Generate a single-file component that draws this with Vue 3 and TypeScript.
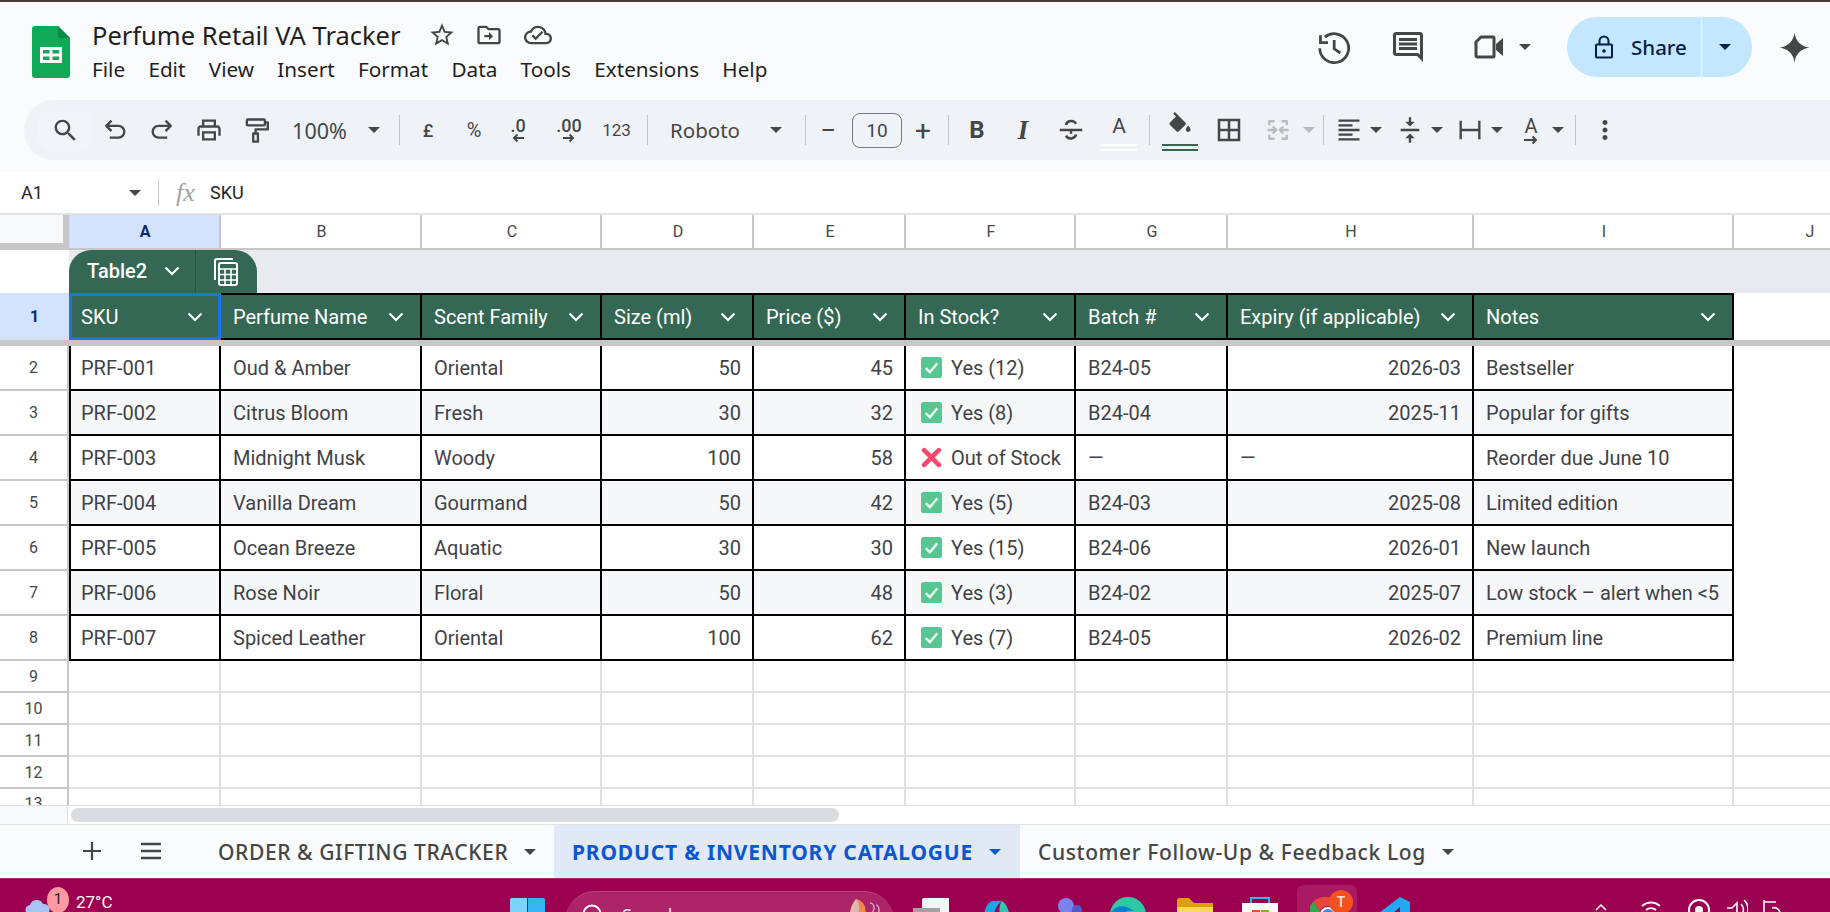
<template>
  <div class="page">
    <header class="top">
      <svg class="logo" width="38" height="52" viewBox="0 0 38 52">
        <path d="M3 0H26L38 12V49a3 3 0 0 1-3 3H3a3 3 0 0 1-3-3V3a3 3 0 0 1 3-3Z" fill="#0fa958" />
        <path d="M26 0L38 12H29a3 3 0 0 1-3-3Z" fill="#0a8a47" />
        <path d="M8 21H30V37H8ZM11 24V27.500H17.500V24ZM20.500 24V27.500H27V24ZM11 30.500V34H17.500V30.500ZM20.500 30.500V34H27V30.500Z" fill="#fff" fill-rule="evenodd" />
      </svg>
      <div class="doc">
        <div class="title-row">
          <span class="title">Perfume Retail VA Tracker</span>
          <svg class="t-star" width="28" height="28" viewBox="0 0 24 24"><path :d="icons.star" /></svg>
          <svg class="t-move" width="28" height="28" viewBox="0 0 24 24"><path :d="icons.move" /></svg>
          <svg class="t-cloud" width="28" height="28" viewBox="0 0 24 24"><path :d="icons.cloud" /></svg>
        </div>
        <nav class="menu">
          <span v-for="m in menus" :key="m">{{ m }}</span>
        </nav>
      </div>
      <div class="actions">
        <svg class="a-history" width="33" height="33" viewBox="0 0 24 24"><path :d="icons.history" fill="none" stroke="#444746" stroke-width="2" /></svg>
        <svg class="a-comment" width="36" height="36" viewBox="0 0 24 24"><path :d="icons.comment" /></svg>
        <svg class="a-video" width="30" height="24" viewBox="0 0 30 24"><path d="M7 2H19a1 1 0 0 1 1 1V21a1 1 0 0 1-1 1H3.500A1.500 1.500 0 0 1 2 20.500V7Z" fill="none" stroke="#444746" stroke-width="3" stroke-linejoin="round" /><path d="M22 9l7-6V21l-7-6Z" /></svg>
        <i class="caret a-caret"></i>
        <div class="share">
          <div class="share-main">
            <svg width="18" height="24" viewBox="0 0 18 24"><path d="M2 9.500H16a1 1 0 0 1 1 1V21.500a1 1 0 0 1-1 1H2a1 1 0 0 1-1-1V10.500a1 1 0 0 1 1-1ZM4.500 9.500V6a4.500 4.500 0 0 1 9 0V9.500" fill="none" stroke="#041e49" stroke-width="2" /><circle cx="9" cy="16" r="1.800" fill="#041e49" /></svg>
            <span>Share</span>
          </div>
          <div class="share-more"><i class="caret dark"></i></div>
        </div>
        <svg class="a-spark" width="31" height="31" viewBox="0 0 24 24"><path d="M12 0.500Q13.500 10.500 23.500 12Q13.500 13.500 12 23.500Q10.500 13.500 0.500 12Q10.500 10.500 12 0.500Z" /></svg>
      </div>
    </header>

    <div class="toolbar">
      <div v-for="(t, i) in toolbar" :key="i" class="tool" :class="t.cls" :style="{ width: t.w + 'px', marginLeft: t.ml + 'px' }">
        <svg v-if="t.d" :width="t.size || 28" :height="t.size || 28" viewBox="0 0 24 24">
          <path v-if="t.stroke" :d="t.d" fill="none" stroke="currentColor" stroke-width="2" stroke-linejoin="round" />
          <path v-else :d="t.d" fill="currentColor" />
        </svg>
        <i v-else-if="t.caret" class="caret"></i>
        <span v-else-if="t.text">{{ t.text }}</span>
        <svg v-if="t.arrow" class="dec-arrow" width="14" height="10" viewBox="0 0 14 10"><path :d="t.arrow" fill="none" stroke="currentColor" stroke-width="2" /></svg>
        <em v-if="t.bar" class="bar"></em>
      </div>
    </div>

    <div class="formula">
      <span class="namebox">A1</span>
      <i class="caret"></i>
      <b class="fsep"></b>
      <span class="fx">fx</span>
      <span class="fvalue">SKU</span>
    </div>

    <div class="sheet">
      <div class="row colhead">
        <div class="corner"></div>
        <div v-for="(c, i) in letters" :key="c" class="letter" :class="{ on: i === 0 }">{{ c }}</div>
      </div>

      <div class="band">
        <div class="band-tab">
          <div class="tab-name">
            <span>Table2</span>
            <svg width="16" height="10" viewBox="0 0 16 10"><path d="M1.500 1.500L8 8l6.500-6.500" fill="none" stroke="#fff" stroke-width="2" /></svg>
          </div>
          <div class="tab-calc">
            <svg width="26" height="30" viewBox="0 0 26 30" fill="none" stroke="#fff" stroke-width="2"><path d="M2 23V4a2 2 0 0 1 2-2H20" /><rect x="6" y="6" width="18" height="22" rx="2" /><path d="M6 12H24M6 17.500H24M6 23H24M12 12V28M18 12V28" stroke-width="1.600" /></svg>
          </div>
        </div>
      </div>

      <div class="row headrow">
        <div class="rownum on">1</div>
        <div v-for="(h, i) in headers" :key="h" class="hcell" :class="{ active: i === 0 }">
          <span>{{ h }}</span>
          <svg width="16" height="10" viewBox="0 0 16 10"><path d="M1.500 1.500L8 8l6.500-6.500" fill="none" stroke="#fff" stroke-width="2" /></svg>
        </div>
      </div>
      <div class="frozen"></div>

      <div v-for="(r, ri) in rows" :key="r[0]" class="row datarow" :class="{ alt: ri % 2 === 1 }">
        <div class="rownum">{{ ri + 2 }}</div>
        <div v-for="(v, ci) in r" :key="ci" class="cell" :class="{ num: isNum(v), first: ci === 0 }">
          <template v-if="ci === 5">
            <svg v-if="v.startsWith('Yes')" class="emoji" width="21" height="21" viewBox="0 0 20 20">
              <rect width="20" height="20" rx="2.500" fill="#57c690" /><path d="M4.500 10.500L8.500 14.500L15.500 6" fill="none" stroke="#eafaf1" stroke-width="2.400" />
            </svg>
            <svg v-else class="emoji" width="21" height="21" viewBox="0 0 20 20">
              <path d="M3 3L17 17M17 3L3 17" fill="none" stroke="#f4496d" stroke-width="4.500" stroke-linecap="round" />
            </svg>
          </template>
          <span>{{ v }}</span>
        </div>
      </div>

      <div v-for="n in [9, 10, 11, 12, 13]" :key="n" class="row blank" :class="{ cut: n === 13 }">
        <div class="rownum">{{ n }}</div>
        <div v-for="c in letters" :key="c" class="bcell"></div>
      </div>

      <div class="hscroll">
        <div class="hs-corner"></div>
        <div class="hs-thumb"></div>
      </div>
    </div>

    <div class="tabs">
      <svg class="tab-add" width="24" height="24" viewBox="0 0 24 24"><path d="M12 3V21M3 12H21" stroke="#444746" stroke-width="2.200" fill="none" /></svg>
      <svg class="tab-all" width="24" height="24" viewBox="0 0 24 24"><path d="M2 5H22M2 12H22M2 19H22" stroke="#444746" stroke-width="2.400" fill="none" /></svg>
      <div class="stab first-tab"><span>ORDER &amp; GIFTING TRACKER</span><i class="caret"></i></div>
      <div class="stab current"><span>PRODUCT &amp; INVENTORY CATALOGUE</span><i class="caret blue"></i></div>
      <div class="stab last-tab"><span>Customer Follow-Up &amp; Feedback Log</span><i class="caret"></i></div>
    </div>

    <footer class="taskbar">
      <div class="weather">
        <svg width="26" height="20" viewBox="0 0 26 20"><path d="M6 20a5 5 0 0 1-1-10a7 7 0 0 1 13-1a5.500 5.500 0 0 1 2 11Z" fill="#a9c4f2" /></svg>
        <span class="wbadge">1</span>
        <span class="temp">27°C</span>
      </div>
      <div v-for="(t, i) in taskIcons" :key="i" class="task" :style="{ width: t.w + 'px', marginLeft: t.ml + 'px', marginTop: t.top + 'px' }">
        <div v-if="t.kind === 'search'" class="search-pill">
          <svg width="24" height="24" viewBox="0 0 24 24"><circle cx="11" cy="11" r="8.500" fill="none" stroke="#fff" stroke-width="2" /></svg>
          <span>Search</span>
          <svg class="fig" width="38" height="22" viewBox="0 0 38 22"><path d="M14 1C22 3 26 10 22 22H8C6 14 10 6 14 1Z" fill="#f08a4b" /><path d="M14 1C18 5 18 12 15 22H8C7 14 10 6 14 1Z" fill="#e0b8b0" /><path d="M28 5a4 5 0 0 1 0 10M34 7a3 6 0 0 1 0 12" fill="none" stroke="#d7a8c8" stroke-width="1.500" /></svg>
        </div>
        <div v-else-if="t.kind === 'chrome'" class="chrome-slot">
          <svg width="36" height="40" viewBox="0 0 36 40"><path d="M18 0a18 18 0 0 1 15.600 9H18a9 9 0 0 0-8 5L3 5A18 18 0 0 1 18 0Z" fill="#e8453c" /><path d="M3 5l7 9a9 9 0 0 0 1 10L3 30A18 18 0 0 1 3 5Z" fill="#34a853" /><circle cx="18" cy="18" r="7" fill="#4285f4" stroke="#fff" stroke-width="2" /></svg>
          <span class="chrome-badge">T</span>
        </div>
        <svg v-else :width="t.w" height="40" :viewBox="`0 0 ${t.w} 40`">
          <path v-for="(p, j) in t.paths" :key="j" :d="p.d" :fill="p.line ? 'none' : p.fill" :stroke="p.line ? p.fill : 'none'" :stroke-width="p.line || 0" />
        </svg>
      </div>
    </footer>
  </div>
</template>

<script setup lang="ts">
interface Tool {
  c: number
  w: number
  d?: string
  stroke?: boolean
  size?: number
  text?: string
  caret?: boolean
  arrow?: string
  bar?: boolean
  cls?: string
}
interface TaskIcon {
  c: number
  w: number
  top: number
  kind?: 'search' | 'chrome'
  paths?: { d: string; fill: string; line?: number }[]
}

const icons = {
  star: 'M22 9.240l-7.190-.620L12 2 9.190 8.630 2 9.240l5.460 4.730L5.820 21 12 17.270 18.180 21l-1.630-7.030L22 9.240zM12 15.400l-3.760 2.270 1-4.280-3.320-2.880 4.380-.380L12 6.100l1.710 4.040 4.380.380-3.320 2.880 1 4.280L12 15.400z',
  move: 'M20 6h-8l-2-2H4c-1.100 0-2 .9-2 2v12c0 1.100.9 2 2 2h16c1.100 0 2-.9 2-2V8c0-1.100-.9-2-2-2zm0 12H4V6h5.170l2 2H20v10zM12 14H8v-2h4V9.500l3.500 3.500-3.500 3.500V14z',
  cloud: 'M19.350 10.040C18.670 6.590 15.640 4 12 4 9.110 4 6.600 5.640 5.350 8.040 2.340 8.360 0 10.910 0 14c0 3.310 2.690 6 6 6h13c2.760 0 5-2.240 5-5 0-2.640-2.050-4.780-4.650-4.960zM19 18H6c-2.210 0-4-1.790-4-4s1.790-4 4-4h.71C7.370 7.690 9.480 6 12 6c3.040 0 5.500 2.460 5.500 5.500v.5H19c1.660 0 3 1.340 3 3s-1.340 3-3 3zm-9-1.500l-3.500-3.500 1.410-1.410L10 13.670l5.180-5.180 1.410 1.410L10 16.500z',
  history: 'M5.750 4.460A10.500 10.500 0 1 1 2 12.500M2.500 3v5.500H8M12.500 6.500V13L17 16',
  comment: 'M21.990 4c0-1.100-.89-2-1.990-2H4c-1.100 0-2 .9-2 2v12c0 1.100.9 2 2 2h14l4 4-.01-18zM20 4v13.170L18.830 16H4V4h16zM6 12h12v2H6zm0-3h12v2H6zm0-3h12v2H6z',
  search: 'M15.500 14h-.79l-.28-.27C15.410 12.590 16 11.110 16 9.500 16 5.910 13.090 3 9.500 3S3 5.910 3 9.500 5.910 16 9.500 16c1.610 0 3.090-.59 4.230-1.570l.27.28v.79l5 4.990L20.490 19l-4.990-5zm-6 0C7.010 14 5 11.990 5 9.500S7.010 5 9.500 5 14 7.010 14 9.500 11.990 14 9.500 14z',
  print: 'M19 8h-1V3H6v5H5c-1.660 0-3 1.340-3 3v6h4v4h12v-4h4v-6c0-1.660-1.340-3-3-3zM8 5h8v3H8V5zm8 14H8v-4h8v4zm2-2v-4H6v4H4v-6c0-.55.45-1 1-1h14c.55 0 1 .45 1 1v6h-2z',
  fill: 'M16.560 8.940L7.620 0 6.210 1.410l2.380 2.380-5.150 5.150c-.59.59-.59 1.540 0 2.120l5.500 5.500c.29.29.68.44 1.060.44s.77-.15 1.060-.44l5.500-5.500c.59-.58.59-1.530 0-2.120zM19 11.500s-2 2.170-2 3.500c0 1.100.9 2 2 2s2-.9 2-2c0-1.330-2-3.500-2-3.500z',
  borders: 'M3 3v18h18V3H3zm8 16H5v-6h6v6zm0-8H5V5h6v6zm8 8h-6v-6h6v6zm0-8h-6V5h6v6z',
  alignLeft: 'M15 15H3v2h12v-2zm0-8H3v2h12V7zM3 13h18v-2H3v2zm0 8h18v-2H3v2zM3 3v2h18V3H3z',
  valign: 'M8 19h3v4h2v-4h3l-4-4-4 4zm8-14h-3V1h-2v4H8l4 4 4-4zM4 11v2h16v-2H4z',
  dots: 'M12 8c1.100 0 2-.9 2-2s-.9-2-2-2-2 .9-2 2 .9 2 2 2zm0 2c-1.100 0-2 .9-2 2s.9 2 2 2 2-.9 2-2-.9-2-2-2zm0 6c-1.100 0-2 .9-2 2s.9 2 2 2 2-.9 2-2-.9-2-2-2z',
}

// items carry their centre x, the left margin is worked out from the previous item
function place<T extends { c: number; w: number }>(items: T[], start: number) {
  let x = start
  return items.map((it) => {
    const left = it.c - it.w / 2
    const ml = left - x
    x = left + it.w
    return { ...it, ml }
  })
}

const sep = (c: number): Tool => ({ c, w: 1, cls: 'sep' })
const circle = (cx: number, cy: number, r: number) => `M${cx - r} ${cy}a${r} ${r} 0 1 1 ${r * 2} 0a${r} ${r} 0 1 1 ${-r * 2} 0Z`

const toolbar = place<Tool>([
  { c: 65, w: 55, d: icons.search, size: 29, cls: 'searchbtn' },
  { c: 115, w: 28, d: 'M9 4L4.500 8.500L9 13M5 8.500H15a5 5 0 0 1 0 10H7.500', stroke: true },
  { c: 162, w: 28, d: 'M15 4L19.500 8.500L15 13M19 8.500H9a5 5 0 0 0 0 10H16.500', stroke: true },
  { c: 209, w: 28, d: icons.print },
  { c: 255, w: 28, d: 'M6 3H19.500a1 1 0 0 1 1 1V7a1 1 0 0 1-1 1H6a1 1 0 0 1-1-1V4a1 1 0 0 1 1-1ZM20.500 5.500H23V11.500H12.500V15M10.500 15H14.500V22H10.500Z', stroke: true },
  { c: 319.5, w: 56, text: '100%', cls: 'tt zoomtxt' },
  { c: 374, w: 12, caret: true },
  sep(399.5),
  { c: 428, w: 20, text: '£', cls: 'tt sm' },
  { c: 474, w: 24, text: '%', cls: 'tt pct' },
  { c: 518, w: 30, text: '.0', cls: 'tt dec', arrow: 'M13 5H3M6.500 1.500L3 5L6.500 8.500' },
  { c: 569, w: 34, text: '.00', cls: 'tt dec', arrow: 'M1 5H11M7.500 1.500L11 5L7.500 8.500' },
  { c: 616.5, w: 34, text: '123', cls: 'tt n123' },
  sep(647),
  { c: 705, w: 72, text: 'Roboto', cls: 'tt big' },
  { c: 775.5, w: 12, caret: true },
  sep(805),
  { c: 828, w: 16, text: '−', cls: 'tt pm' },
  { c: 877, w: 50, text: '10', cls: 'tt sizebox' },
  { c: 923, w: 20, text: '+', cls: 'tt pm' },
  sep(948),
  { c: 977, w: 20, text: 'B', cls: 'tt bold' },
  { c: 1023, w: 20, text: 'I', cls: 'tt ital' },
  { c: 1071, w: 28, d: 'M8 8a4.200 3.800 0 0 1 8 -1M16 15.500a4.200 3.800 0 0 1-8 1M3 12H21M12 15V12', stroke: true, size: 30 },
  { c: 1119, w: 36, text: 'A', cls: 'tt letterA', bar: true },
  sep(1149.5),
  { c: 1179.5, w: 36, d: icons.fill, size: 28, cls: 'fillbtn', bar: true },
  { c: 1229, w: 30, d: icons.borders, size: 30 },
  { c: 1278, w: 28, d: 'M9 4.500H4.500V8M4.500 16V19.500H9M15 4.500H19.500V8M19.500 16V19.500H15M3 12H10M7.500 9L10.500 12L7.500 15M21 12H14M16.500 9L13.500 12L16.500 15', stroke: true, cls: 'off' },
  { c: 1309, w: 12, caret: true, cls: 'off' },
  sep(1323.5),
  { c: 1349, w: 28, d: icons.alignLeft },
  { c: 1376, w: 12, caret: true },
  { c: 1410, w: 28, d: icons.valign },
  { c: 1437, w: 12, caret: true },
  { c: 1470, w: 28, d: 'M4 4V20M20 4V20M4 12H20', stroke: true },
  { c: 1497, w: 12, caret: true },
  { c: 1531, w: 26, text: 'A', cls: 'tt rotA', arrow: 'M0 5H12M8.500 1.500L12 5L8.500 8.500' },
  { c: 1558, w: 12, caret: true },
  sep(1575),
  { c: 1605, w: 28, d: icons.dots, size: 30 },
], 24)

const menus = ['File', 'Edit', 'View', 'Insert', 'Format', 'Data', 'Tools', 'Extensions', 'Help']
const letters = ['A', 'B', 'C', 'D', 'E', 'F', 'G', 'H', 'I', 'J']
const headers = ['SKU', 'Perfume Name', 'Scent Family', 'Size (ml)', 'Price ($)', 'In Stock?', 'Batch #', 'Expiry (if applicable)', 'Notes']
const rows = [
  ['PRF-001', 'Oud & Amber', 'Oriental', '50', '45', 'Yes (12)', 'B24-05', '2026-03', 'Bestseller'],
  ['PRF-002', 'Citrus Bloom', 'Fresh', '30', '32', 'Yes (8)', 'B24-04', '2025-11', 'Popular for gifts'],
  ['PRF-003', 'Midnight Musk', 'Woody', '100', '58', 'Out of Stock', '—', '—', 'Reorder due June 10'],
  ['PRF-004', 'Vanilla Dream', 'Gourmand', '50', '42', 'Yes (5)', 'B24-03', '2025-08', 'Limited edition'],
  ['PRF-005', 'Ocean Breeze', 'Aquatic', '30', '30', 'Yes (15)', 'B24-06', '2026-01', 'New launch'],
  ['PRF-006', 'Rose Noir', 'Floral', '50', '48', 'Yes (3)', 'B24-02', '2025-07', 'Low stock – alert when <5'],
  ['PRF-007', 'Spiced Leather', 'Oriental', '100', '62', 'Yes (7)', 'B24-05', '2026-02', 'Premium line'],
]
const isNum = (v: string) => /^\d[\d-]*$/.test(v)

// taskbar runs past the bottom of the window, so only the tops of these show
const taskIcons = place<TaskIcon>([
  { c: 527, w: 35, top: 19, paths: [{ d: 'M0 2a2 2 0 0 1 2-2H17V17H0Z', fill: '#7dd3fb' }, { d: 'M18 0H33a2 2 0 0 1 2 2V17H18Z', fill: '#37b6f6' }] },
  { c: 729.5, w: 329, top: 12, kind: 'search' },
  { c: 931, w: 36, top: 19, paths: [{ d: 'M9 2a2 2 0 0 1 2-2H36V40H9Z', fill: '#f4f4f4' }, { d: 'M0 10H27V40H0Z', fill: '#a3a3a3' }] },
  { c: 997, w: 32, top: 22, paths: [{ d: 'M11 0H21C15 4 13 12 10 22L2 20C3 9 6 2 11 0Z', fill: '#1aa5e8' }, { d: 'M21 0C25 2 27 8 29 14L19 15C18 9 18 4 21 0Z', fill: '#35c4b0' }, { d: circle(25, 20, 7), fill: '#b450d2' }] },
  { c: 1063, w: 37, top: 19, paths: [{ d: circle(21, 8, 8), fill: '#7b83eb' }, { d: circle(32, 12, 5), fill: '#5059c9' }, { d: 'M12 18H37V40H12Z', fill: '#7b83eb' }, { d: 'M0 19H18V40H0Z', fill: '#4b53bc' }] },
  { c: 1128, w: 36, top: 18, paths: [{ d: circle(18, 18, 18), fill: '#2fc8a4' }, { d: 'M0 20C2 8 14 6 24 14C14 12 8 18 8 40H0Z', fill: '#0f7fd1' }] },
  { c: 1195, w: 36, top: 19, paths: [{ d: 'M0 2a2 2 0 0 1 2-2H12L17 5H36V40H0Z', fill: '#dca000' }, { d: 'M0 9H36V40H0Z', fill: '#ffd75e' }] },
  { c: 1260, w: 36, top: 18, paths: [{ d: 'M0 6H36V40H0Z', fill: '#fafafa' }, { d: 'M8 6V0H28V6H26V2H10V6Z', fill: '#25bfe6' }, { d: 'M10 13H18V40H10Z', fill: '#f25022' }, { d: 'M19 13H27V40H19Z', fill: '#7fba00' }] },
  { c: 1327, w: 60, top: 6, kind: 'chrome' },
  { c: 1392, w: 36, top: 18, paths: [{ d: 'M26 0L36 5V40H26V10L12 22L5 16Z', fill: '#23a9f2' }, { d: 'M5 16L12 22L6 28L0 24Z', fill: '#0c7ec4' }] },
  { c: 1601, w: 14, top: 24, paths: [{ d: 'M2 7L7 2L12 7', fill: '#fff', line: 1.5 }] },
  { c: 1651, w: 24, top: 19, paths: [{ d: 'M3 8a13 13 0 0 1 18 0M7 12a8 8 0 0 1 10 0', fill: '#fff', line: 2 }] },
  { c: 1699, w: 24, top: 19, paths: [{ d: circle(12, 12, 10), fill: '#fff', line: 2 }, { d: circle(12, 12, 4), fill: '#fff' }] },
  { c: 1736, w: 24, top: 19, paths: [{ d: 'M3 10H8L13 5V18M17 6a8 8 0 0 1 2 8M20 2a12 12 0 0 1 3 14', fill: '#fff', line: 1.6 }] },
  { c: 1771, w: 22, top: 19, paths: [{ d: 'M4 2V18M4 4H16M12 10a6 6 0 0 1 8 6', fill: '#fff', line: 1.6 }] },
], 130)
</script>

<style scoped>
.page { width: 1830px; height: 912px; overflow: hidden; background: #f9fbfd; font-family: Roboto, sans-serif; color: #444746; border-top: 2px solid #4a3a3c; box-sizing: border-box; display: flex; flex-direction: column; }
svg { display: block; flex: none; fill: #444746; }

.top { display: flex; height: 98px; flex: none; }
.logo { margin: 24px 0 0 32px; }
.doc { margin-left: 22px; }
.title-row { display: flex; align-items: center; height: 38px; margin-top: 14px; }
.title { font-family: "Noto Sans", sans-serif; font-size: 25.5px; color: #1f1f1f; width: 336px; white-space: nowrap; }
.t-move { margin-left: 19px; }
.t-cloud { margin-left: 21px; }
.menu { display: flex; gap: 23.3px; font-family: "Noto Sans", sans-serif; font-size: 20.7px; color: #1f1f1f; margin-top: 1px; line-height: 28px; }

.actions { margin-left: auto; margin-right: 20px; display: flex; align-items: center; height: 60px; margin-top: 15px; }
.a-comment { margin-left: 40px; }
.a-video { margin-left: 48px; }
.a-caret { margin-left: 15px; }
.share { display: flex; height: 60px; margin-left: 36px; color: #041e49; }
.share-main { width: 134px; background: #c2e7ff; border-radius: 30px 0 0 30px; display: flex; align-items: center; padding-left: 28px; box-sizing: border-box; gap: 18px; font-family: "Noto Sans", sans-serif; font-size: 20.5px; font-weight: 500; }
.share-more { width: 50px; margin-left: 1px; background: #c2e7ff; border-radius: 0 30px 30px 0; display: flex; align-items: center; justify-content: center; padding-right: 4px; box-sizing: border-box; }
.a-spark { margin-left: 27px; }

.caret { display: block; flex: none; width: 0; height: 0; border-left: 6px solid transparent; border-right: 6px solid transparent; border-top: 6px solid #444746; }
.caret.dark { border-top-color: #041e49; }
.caret.blue { border-top-color: #0b57d0; }

.toolbar { display: flex; align-items: center; flex: none; height: 60px; margin-left: 24px; background: #eff3f8; border-radius: 30px 0 0 30px; }
.tool { display: flex; align-items: center; justify-content: center; flex: none; height: 42px; color: #444746; position: relative; }
.searchbtn { background: #f0f4fb; border-radius: 14px; }
.sep { height: 30px; background: #c4c7c5; }
.off { color: #b9bcbd; }
.off .caret { border-top-color: #b9bcbd; }
.tt { font-family: "Noto Sans", sans-serif; white-space: nowrap; }
.big { font-size: 20.5px; }
.zoomtxt { font-size: 21.5px; }
.sm { font-family: Roboto, sans-serif; font-size: 18px; font-weight: 500; }
.pct { font-family: Roboto, sans-serif; font-size: 20px; }
.n123 { font-family: Roboto, sans-serif; font-size: 17px; }
.dec { flex-direction: column; font-family: Roboto, sans-serif; font-size: 18px; font-weight: 500; line-height: 18px; align-items: center; }
.dec-arrow { margin-top: -2px; fill: none; }
.pm { font-family: Roboto, sans-serif; font-size: 28px; font-weight: 400; }
.sizebox { border: 1px solid #747775; border-radius: 8px; box-sizing: border-box; height: 35px; font-family: Roboto, sans-serif; font-size: 19px; }
.bold { font-family: Roboto, sans-serif; font-weight: 700; font-size: 24px; }
.ital { font-family: "Liberation Serif", serif; font-style: italic; font-weight: 700; font-size: 27px; }
.letterA { font-family: Roboto, sans-serif; font-size: 21px; padding-bottom: 8px; box-sizing: border-box; }
.rotA { flex-direction: column; font-family: Roboto, sans-serif; font-size: 20px; line-height: 20px; }
.rotA .dec-arrow { margin-top: -1px; }
.fillbtn { padding-bottom: 8px; box-sizing: border-box; }
.bar { position: absolute; left: 0; right: 0; bottom: 0; height: 7px; border-top: 2px solid; border-bottom: 2px solid; box-sizing: border-box; }
.letterA .bar { border-color: #fff; }
.fillbtn .bar { border-color: #34664f; }

.formula { display: flex; align-items: center; flex: none; height: 41px; margin-top: 12px; background: #fff; color: #1f1f1f; }
.namebox { margin-left: 21px; width: 108px; font-size: 18px; }
.fsep { width: 1px; height: 26px; background: #c7c7c7; margin-left: 17px; }
.fx { font-family: "Liberation Serif", serif; font-style: italic; font-size: 26px; color: #a2a2a2; margin-left: 17px; width: 34px; }
.fvalue { font-size: 18px; }

.sheet { flex: 1; min-height: 0; background: #fff; display: flex; flex-direction: column; overflow: hidden; }
.row { display: grid; grid-template-columns: 69px 152px 201px 180px 152px 152px 170px 152px 246px 260px 152px; flex: none; }

.colhead { height: 37px; box-sizing: border-box; border-top: 2px solid #e3e3e3; }
.corner { background: #f8f9fa; border-right: 6px solid #c7c7c7; border-bottom: 7px solid #c7c7c7; box-sizing: border-box; }
.letter { display: flex; align-items: center; justify-content: center; font-size: 16px; padding-left: 2px; border-right: 2px solid #c7c7c7; border-bottom: 2px solid #c7c7c7; box-sizing: border-box; }
.letter.on { background: #d3e3fd; color: #0b2a6b; font-weight: 700; }

.band { height: 43px; flex: none; background: #e8eaed; margin-left: 69px; display: flex; align-items: stretch; }
.band-tab { display: flex; background: #356854; border-radius: 22px 22px 0 0; width: 188px; color: #fff; }
.tab-name { width: 127px; display: flex; align-items: center; gap: 17px; padding: 0 0 2px 18px; box-sizing: border-box; font-size: 20px; font-weight: 500; border-right: 1px solid #2a5442; }
.tab-calc { flex: 1; display: flex; align-items: center; justify-content: center; padding-right: 2px; }
.tab-calc svg, .hcell svg { fill: none; }

.headrow { height: 47px; }
.rownum { display: flex; align-items: center; justify-content: center; font-size: 16px; border-right: 2px solid #c7c7c7; border-bottom: 2px solid #c7c7c7; box-sizing: border-box; background: #fff; }
.rownum.on { background: #d3e3fd; color: #0b2a6b; font-weight: 700; border: 0; }
.hcell { display: flex; align-items: center; justify-content: space-between; background: #356854; color: #fff; font-size: 20px; padding: 0 16px 0 12px; box-sizing: border-box; border-right: 2px solid #000; border-top: 2px solid #000; border-bottom: 2px solid #000; white-space: nowrap; }
.hcell.active { box-shadow: inset 0 0 0 3px #1a73e8; border: 0; padding-right: 18px; }
.frozen { height: 6px; flex: none; background: #c7c7c7; }

.datarow { height: 45px; }
.cell { display: flex; align-items: center; gap: 9px; font-size: 20px; color: #3f4247; padding: 0 11px 0 12px; box-sizing: border-box; border-right: 2px solid #000; border-bottom: 2px solid #000; white-space: nowrap; background: #fff; }
.datarow.alt .cell { background: #f6f7f9; }
.cell.first { border-left: 2px solid #000; padding-left: 10px; }
.cell.num { justify-content: flex-end; }
.emoji { margin-left: 3px; fill: none; }

.blank { height: 32px; }
.blank.cut { height: 16px; overflow: hidden; }
.blank.cut .rownum { align-items: flex-start; padding-top: 5px; border-bottom: 0; }
.bcell { border-right: 2px solid #e1e1e1; border-bottom: 2px solid #e1e1e1; box-sizing: border-box; }
.cut .bcell { border-bottom: 0; }

.hscroll { height: 19px; flex: none; display: flex; align-items: center; border-top: 1px solid #e1e1e1; box-sizing: border-box; }
.hs-corner { width: 68px; height: 100%; background: #f8f9fa; border-right: 1px solid #e1e1e1; box-sizing: border-box; }
.hs-thumb { width: 768px; height: 14px; margin-left: 3px; background: #dadce0; border-radius: 7px; }

.tabs { height: 55px; flex: none; display: flex; align-items: stretch; background: #f9fbfd; border-top: 1px solid #e1e3e6; border-bottom: 1px solid #a52a66; box-sizing: border-box; font-family: "Noto Sans", sans-serif; font-size: 21px; font-weight: 500; letter-spacing: .6px; }
.tab-add { margin: 14px 0 0 80px; }
.tab-all { margin: 14px 0 0 35px; }
.stab { display: flex; align-items: center; white-space: nowrap; gap: 16px; }
.first-tab { margin-left: 55px; width: 336px; }
.current { width: 466px; padding-left: 18px; box-sizing: border-box; background: #e1e9f7; color: #0b57d0; font-weight: 700; letter-spacing: .8px; }
.last-tab { padding-left: 18px; }

.taskbar { height: 33px; flex: none; background: #9c0050; box-sizing: border-box; display: flex; overflow: hidden; color: #fff; }
.weather { display: flex; flex: none; width: 130px; position: relative; padding: 16px 0 0 25px; box-sizing: border-box; }
.wbadge { position: absolute; left: 47px; top: 8px; width: 22px; height: 26px; border-radius: 50%; background: #ff9aa2; color: #222; font-size: 15px; text-align: center; line-height: 24px; }
.temp { position: absolute; left: 76px; top: 12px; font-size: 17px; line-height: 22px; }
.task { flex: none; }
.search-pill { height: 60px; background: #ab2468; border-radius: 30px; display: flex; align-items: flex-start; padding: 11px 14px 0 16px; box-sizing: border-box; border-top: 1px solid #b8407c; }
.search-pill span { margin-left: 17px; font-size: 18px; color: #f3e3ec; font-family: "Noto Sans", sans-serif; line-height: 24px; }
.fig { margin: -5px 0 0 auto; }
.chrome-slot { height: 40px; background: #a81a61; border-radius: 6px; padding: 12px 0 0 13px; box-sizing: border-box; position: relative; }
.chrome-badge { position: absolute; left: 32px; top: 5px; width: 24px; height: 24px; border-radius: 50%; background: #f4511e; color: #ffe0d0; font-size: 14px; text-align: center; line-height: 24px; font-weight: 500; }
</style>

<style>
html, body { margin: 0; padding: 0; overflow: hidden; background: #fff; }
</style>
